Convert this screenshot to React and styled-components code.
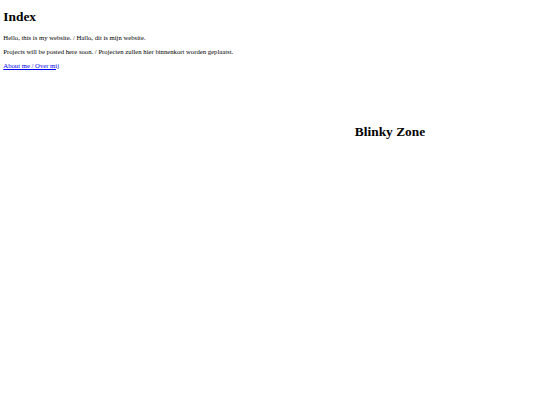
import React from 'react';
import styled, { createGlobalStyle } from 'styled-components';

const GlobalStyle = createGlobalStyle`
  html {
    font-size: 6.7px;
  }
  body {
    margin: 0;
    font-family: "Liberation Serif", "Times New Roman", serif;
    font-size: 1rem;
    color: #000;
    background: #fff;
  }
`;

const Page = styled.div`
  padding: 3.3px;
`;

const Title = styled.h1`
  font-size: 2em;
  margin: ${({ $top }) => $top || '0.67em'} 0 0.67em;
`;

const Text = styled.p`
  margin: 1em 0;
`;

const NavLink = styled.a`
  color: #0000ee;
  text-decoration: underline;
`;

const Zone = styled.section`
  margin-left: 240px;
  padding-top: 40px;
  text-align: center;
`;

const App = () => {
  return (
    <>
      <GlobalStyle />
      <Page>
        <Title $top="6px">Index</Title>
        <Text>Hello, this is my website. / Hallo, dit is mijn website.</Text>
        <Text>Projects will be posted here soon. / Projecten zullen hier binnenkort worden geplaatst.</Text>
        <Text>
          <NavLink href="#about">About me / Over mij</NavLink>
        </Text>
        <Zone>
          <Title>Blinky Zone</Title>
        </Zone>
      </Page>
    </>
  );
};

export default App;
